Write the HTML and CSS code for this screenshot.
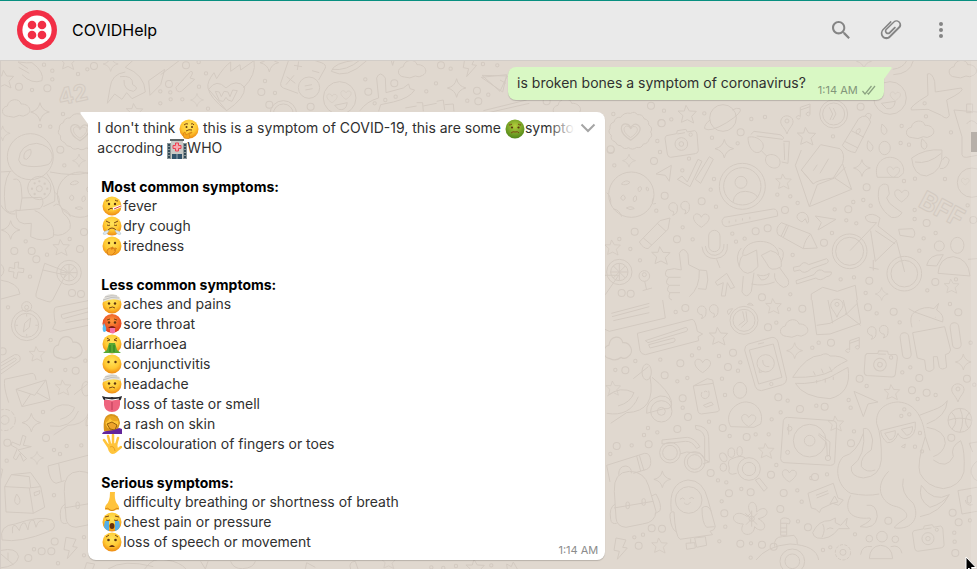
FILE: index.html
```
<!DOCTYPE html>
<html lang="en">
<head>
<meta charset="utf-8">
<title>COVIDHelp</title>
<link rel="stylesheet" href="styles.css">
</head>
<body>
<svg class="defs" aria-hidden="true">
  <defs>
    <radialGradient id="skin" cx=".5" cy=".35" r=".65"><stop offset="0" stop-color="#ffe45c"/><stop offset=".6" stop-color="#ffc832"/><stop offset="1" stop-color="#ee8a12"/></radialGradient>
    <radialGradient id="hot" cx=".5" cy=".35" r=".65"><stop offset="0" stop-color="#ff9a3c"/><stop offset="1" stop-color="#e2361c"/></radialGradient>
    <radialGradient id="sick" cx=".5" cy=".35" r=".65"><stop offset="0" stop-color="#b5cf3c"/><stop offset="1" stop-color="#4f8618"/></radialGradient>
    <path id="star" d="M-4 -26 L6 -9 L27 -8 L13 7 L19 27 L0 17 L-18 25 L-13 5 L-28 -9 L-9 -9Z"/>
    <path id="sparkle" d="M0 -28 Q4 -6 28 0 Q5 4 0 28 Q-4 6 -28 0 Q-5 -4 0 -28Z"/>
    <path id="heart" d="M0 22 C-34 2 -25 -22 -10 -18 Q-2 -16 0 -8 Q7 -22 18 -16 C32 -6 18 10 0 22Z"/>
    <path id="cloud" d="M-25 23 C-48 22 -48 -5 -28 -8 C-24 -32 10 -32 13 -14 C36 -16 50 8 30 18 Q20 26 8 20 Q-8 30 -25 23Z"/>
    <g id="camera"><path d="M-45 -25 L-14 -31 L-12 -40 L14 -44 L18 -36 L40 -40 Q46 -38 47 -30 L51 20 Q50 28 42 29 L-32 40 Q-40 40 -42 30 L-49 -18Z"/><circle r="19"/><circle r="7"/><path d="M-12 -30 L11 -34"/><circle cx="28" cy="-28" r="5"/></g>
    <path id="note" d="M-13 20 a6 5 0 1 1 0 -4 V-12 L16 -22 V10 a6 5 0 1 1 0 -4 M-13 -4 L16 -14"/>
    <g id="quotes"><path d="M-18 8 A13 13 0 1 1 -6 -2 Q-4 16 -20 20 Q-14 14 -18 8Z M18 4 A13 13 0 1 1 30 -6 Q32 12 16 16 Q22 10 18 4Z"/></g>
    <path id="pin" d="M0 34 C-8 12 -22 8 -18 -8 C-12 -26 14 -24 18 -6 C20 8 6 14 0 34Z M-6 -5 a6 6 0 1 0 12 0 a6 6 0 1 0 -12 0"/>
    <path id="bolt" d="M-14 -32 L16 -26 L6 -4 L20 -2 L-10 32 L-4 8 L-20 5Z"/>
    <g id="medal"><path d="M0 -54 Q12 -62 20 -50 Q36 -52 40 -38 Q56 -34 54 -20 Q68 -10 60 2 Q68 14 56 22 Q52 38 38 38 Q32 52 18 48 Q6 58 -6 49 Q-20 56 -28 44 Q-42 44 -46 32 Q-62 26 -58 12 Q-70 2 -62 -8 Q-64 -24 -50 -28 Q-46 -44 -30 -42 Q-20 -58 0 -54Z"/><use href="#heart" transform="scale(1.2)"/><use href="#heart" transform="scale(.85)"/></g>
    <g id="cookie"><circle r="68"/><path d="M-30 -32 q14 -16 26 -5 q-12 12 -26 5 M20 -20 q12 -10 10 6 q-10 12 -10 -6 M-32 10 q8 -18 14 0 q-6 14 -14 0 M6 10 q10 -16 10 6 q-12 12 -10 -6 M-15 40 q16 -8 24 2 q-14 6 -24 -2 M45 -22 q8 -2 6 10 q-8 2 -6 -10"/><path d="M-74 -6 q14 10 12 34 M-55 42 q20 4 26 24 M66 10 q-10 24 8 16"/></g>
    <g id="drink"><path d="M-32 -50 L35 -24 L-8 60 Q-14 70 -26 64 L-54 54 Q-60 50 -58 42Z M-38 -30 L30 -15"/><circle cx="41" cy="-22" r="37"/><circle cx="41" cy="-22" r="25"/><path d="M41 -46 V2 M17 -22 H65 M24 -39 L58 -5 M58 -39 L24 -5"/></g>
    <g id="scooter"><path d="M-88 110 L-40 78 Q50 75 30 -30 M-5 30 Q-30 92 -100 80 M25 -60 L-20 -24 M36 -28 Q84 10 94 42 Q100 70 72 66 L20 80 Q16 40 60 28 Q98 26 94 66"/><ellipse cx="20" cy="-44" rx="14" ry="24"/><circle cx="64" cy="74" r="32"/><circle cx="64" cy="74" r="12"/><path d="M-98 28 Q-60 -4 -18 18 Q-28 48 -66 58"/></g>
    <g id="backpack"><path d="M-55 -50 Q-58 -108 -10 -110 Q35 -110 48 -66 L70 10 Q68 44 30 48 L-20 58 Q-48 56 -50 30Z M-56 0 L62 -20 M-52 -12 Q-72 -2 -66 34 Q-64 50 -48 46 M56 -36 L70 -42 Q88 -10 82 8 L66 18"/><rect x="-20" y="-18" width="10" height="20" rx="5"/><rect x="28" y="-28" width="10" height="20" rx="5"/></g>
    <g id="face"><circle cx="10" cy="10" r="9.5" fill="url(#skin)"/></g>
  </defs>
</svg>
<div class="app">
  <header class="bar">
    <svg class="avatar" viewBox="0 0 40 40" role="img" aria-label="COVIDHelp"><circle cx="20" cy="20" r="20" fill="#f22f46"/><circle cx="20" cy="20" r="14.6" fill="#fff"/><g fill="#f22f46"><circle cx="15" cy="15" r="4.3"/><circle cx="25" cy="15" r="4.3"/><circle cx="15" cy="25" r="4.3"/><circle cx="25" cy="25" r="4.3"/></g></svg>
    <h1 class="name">COVIDHelp</h1>
    <nav class="tools">
      <button class="tool" aria-label="Search"><svg viewBox="0 0 24 24"><path d="M15.9 14.3H15l-.3-.3c1-1.1 1.6-2.7 1.6-4.3 0-3.7-3-6.7-6.7-6.7S3 6 3 9.7s3 6.7 6.7 6.7c1.6 0 3.2-.6 4.3-1.6l.3.3v.8l5.1 5.1 1.5-1.5-5-5.2zm-6.2 0c-2.6 0-4.6-2.1-4.6-4.6s2.1-4.6 4.6-4.6 4.6 2.1 4.6 4.6-2 4.6-4.6 4.6z"/></svg></button>
      <button class="tool" aria-label="Attach"><svg viewBox="0 0 24 24"><path d="M1.8 15.6c0 1.5.6 2.9 1.6 4s2.500 1.600 4 1.600 2.900-.600 4-1.600l9.500-9.500c.8-.8 1.300-1.900 1.300-2.900 0-1.300-.500-2.600-1.400-3.500-1.900-1.900-4.700-2-6.400-.200L6.600 11c-1.200 1.200-1.100 3.200.200 4.400 1.200 1.200 3.200 1.300 4.400.100l5.500-5.500c.300-.300.200-.700-.200-1-.400-.400-.800-.500-1.100-.200l-5.500 5.500c-.500.500-1.400.400-2-.200s-.700-1.500-.200-2l7.900-7.900c1.200-1.200 2.900-.800 4 .200 1.100 1.200 1.100 2.900 0 4l-9.500 9.500c-.8.800-1.800 1.200-2.800 1.200s-2-.400-2.800-1.200c-1.500-1.500-1.500-4.100 0-5.600l7.900-7.900c.300-.300.200-.700-.100-1-.300-.300-.700-.400-1-.100l-7.900 7.900c-1 1.400-1.600 2.900-1.600 4.400z"/></svg></button>
      <button class="tool" aria-label="Menu"><svg viewBox="0 0 24 24"><circle cx="12" cy="6" r="2"/><circle cx="12" cy="12" r="2"/><circle cx="12" cy="18" r="2"/></svg></button>
    </nav>
  </header>
  <main class="chat">
    <svg class="wallpaper" aria-hidden="true" width="1131" height="569">
      <g transform="translate(0 -61)">
      <!-- right column, upper -->
      <g transform="translate(600 100) scale(.3333)">
        <g class="rings"><path class="ring" id="ra" d="M40 42h0M192 32h0M214 58h0M172 123h0M180 156h0M43 196h0M336 113h0M454 57h0M495 51h0M413 130h0M267 176h0M247 211h0M342 237h0M332 269h0M169 332h0M348 320h0M248 382h0M278 418h0M58 417h0M120 481h0M91 447h0M397 401h0M434 416h0M408 425h0M532 284h0M593 309h0M571 289h0M578 465h0M699 109h0M704 328h0M739 361h0M769 370h0M790 300h0M760 306h0M812 317h0M696 399h0M762 532h0M722 538h0M905 78h0M978 49h0M902 129h0M927 134h0M1053 97h0M1035 237h0M945 236h0M912 243h0M944 330h0M944 357h0M1007 399h0M971 415h0M958 452h0M797 579h0M571 583h0M982 571h0M1103 316h0M1068 538h0M313 40h0M152 18h0M974 10h0"/><use href="#ra"/></g>
        <g class="rings big"><path class="ring" id="rb" d="M184 69h0M32 150h0M162 183h0M194 287h0M305 304h0M104 395h0M231 418h0M422 97h0M555 330h0M467 394h0M503 385h0M672 428h0M800 262h0M745 328h0M980 369h0M782 20h0M808 542h0M1006 546h0M486 592h0M65 579h0M92 581h0M1120 360h0"/><use href="#rb"/></g>
        <use href="#medal" x="92" y="94"/><use href="#camera" x="244" y="132"/><use href="#star" x="262" y="42"/><use href="#sparkle" x="373" y="146"/><use href="#sparkle" transform="translate(87 182) scale(.7)"/><use href="#cookie" x="94" y="284"/>
        <circle cx="369" cy="54" r="40"/><path d="M330 60 Q312 74 314 86 Q330 98 380 68 Q430 36 420 26 Q412 22 396 30"/>
        <path d="M452 104 L462 94 L540 104 Q556 112 548 118 L470 108 M444 112 C444 150 470 168 484 152 C504 130 470 104 444 112Z M500 168 C486 190 518 214 536 200 C552 176 520 154 500 168Z M484 152 L500 168 M550 124 H568 L564 190 L545 186 M552 128 L554 180"/>
        <use href="#pin" x="561" y="68"/><use href="#star" x="620" y="108"/><use href="#note" x="614" y="34"/>
        <circle cx="701" cy="42" r="42"/><circle cx="701" cy="42" r="33"/><path d="M688 22 L698 42 L690 60 M700 24 L708 42 L698 60"/>
        <path d="M727 136 L776 56 Q800 36 812 66 L766 158 Q740 154 727 136Z M796 48 Q802 34 814 44 L810 58 M754 92 L792 112 M734 124 L774 144 M770 102 Q764 88 780 86 Q784 100 770 102"/>
        <path id="drop" d="M846 72 Q872 92 854 104 Q838 100 846 72Z"/><use href="#drop" x="-42" y="50"/><use href="#drop" x="120" y="44"/><ellipse cx="854" cy="144" rx="17" ry="20"/>
        <use href="#cloud" x="962" y="90"/>
        <path d="M935 174 Q975 145 1026 150 Q1032 214 980 228 Q940 228 935 174Z M945 186 Q985 194 1024 160 M1028 180 Q1036 162 1048 180 Q1042 208 1020 206"/>
        <path d="M604 210 L662 134 L720 146 Q736 160 728 190 L700 234 Q650 240 640 252Z M604 150 L586 196 L628 320 L652 254 L704 234 L755 268 L628 320 M604 210 L640 252 M728 192 L755 268 M704 234 L736 202 M640 212 L652 194 M660 220 L686 176"/>
        <use href="#sparkle" transform="translate(786 204) scale(.9)"/>
        <path d="M832 232 C820 190 850 170 872 172 C910 174 916 214 908 222 L896 232Z"/><use href="#heart" transform="translate(880 215) scale(.8)"/>
        <path d="M838 262 Q850 246 864 256 L868 282 L860 294 Q866 312 884 322 L906 338 Q896 356 874 352 C842 330 828 300 838 262Z"/><use href="#heart" transform="translate(905 286) scale(.9)"/>
        <text x="952" y="318" font-size="76" transform="rotate(28 952 318)">BFF</text>
        <use href="#star" transform="translate(551 244) scale(.85)"/>
        <circle cx="427" cy="259" r="69"/><circle cx="427" cy="259" r="56"/><circle cx="423" cy="247" r="18"/><path d="M399 306 Q404 274 436 274 Q464 276 473 292"/>
        <path d="M372 352 L520 327 Q534 326 533 348 L382 380 Q366 380 366 362Z"/><path d="M386 366h3M406 362h3M426 358h3M448 354h3" stroke-width="7"/>
        <path d="M168 222 L214 196 L208 244 L196 226Z M232 238 L246 228 L262 246 L294 178 L306 184 L270 260Z M286 238 L328 170 L340 178 L302 250Z"/>
        <use href="#quotes" x="238" y="326"/><use href="#heart" x="304" y="360"/>
        <path d="M118 426 L180 362 L210 354 L204 388 L144 446 Q130 446 118 426Z M130 414 L156 436 M172 370 L198 394 M544 368 L632 402 L652 444 L610 446 L534 404 Q524 384 544 368Z M560 374 L544 408 M566 376 L550 412 M632 402 Q614 420 610 446"/>
        <path d="M606 366 Q584 356 594 342 Q610 330 622 346 Q630 364 622 370 L616 356Z M646 348 L708 358 L654 390 L664 368Z"/>
        <use href="#star" transform="translate(183 466)"/><use href="#star" transform="translate(38 442) scale(.85)"/>
        <rect x="326" y="391" width="34" height="64" rx="17"/><path d="M306 440 Q310 476 346 476 Q386 472 382 432 M316 438 Q320 466 346 466 Q374 460 372 432 M350 478 L360 504"/>
        <path d="M200 510 Q224 502 244 510 Q240 476 238 460 Q250 436 264 462 L266 494 L298 510 Q300 564 268 590 M298 510 L320 512 Q328 540 318 568 L294 566 M200 510 Q190 528 206 532 L242 532 M206 532 Q192 550 208 556 L240 556 M208 556 Q196 572 210 578 L240 578 M210 578 Q202 596 216 600"/>
        <circle cx="58" cy="516" r="38"/><circle cx="58" cy="516" r="26"/><path d="M58 490V542M32 516H84M40 498L76 534M76 498L40 534M0 526L56 526L16 584"/><circle cx="133" cy="528" r="16"/><circle cx="133" cy="524" r="6"/><path d="M134 544 L140 570 M128 572 L156 564"/>
        <path d="M346 546 L380 520 L404 562 L392 566 L382 548 L376 588 L364 588 L370 548 L352 556Z"/>
        <path d="M428 464 C430 412 530 410 536 464 M418 500 Q404 466 424 444 M536 444 Q560 450 544 486 M418 500 Q420 460 438 466 L470 450 L474 500 Q440 540 418 500Z M484 466 L512 452 Q548 460 544 500 Q510 520 500 490Z M430 528 L426 576 Q440 600 454 574 L462 518 M524 520 Q520 546 550 562 Q572 560 564 538 L538 502 M454 552 Q490 560 524 546 M472 524 Q492 532 508 520 Q504 540 484 540Z"/>
        <path d="M580 502 L600 498 Q610 480 626 494 L680 476 Q690 484 680 490 L634 506 Q612 526 600 510 L582 514Z M588 542 L642 524 Q656 500 674 516 L694 516 Q696 528 680 530 Q660 546 648 534 L590 552Z"/>
        <circle cx="749" cy="454" r="52"/><circle cx="749" cy="454" r="42"/><circle cx="913" cy="521" r="52"/><circle cx="913" cy="521" r="40"/><path d="M750 452 L830 368 Q796 370 796 350 Q816 334 840 354 L834 378 L890 422 L826 484 L812 392 M890 424 L914 516 M896 388 L938 386 Q950 400 940 412 L900 406Z M826 392 L886 432 M808 502 L836 508 M820 480 L820 512"/>
        <circle cx="1018" cy="438" r="15"/><ellipse cx="1072" cy="436" rx="20" ry="24"/><path d="M1014 520 Q1018 472 1060 470 Q1106 476 1110 528Z M980 496 Q988 462 1030 464 L1010 498Z M1104 478 L1131 476"/>
        <use href="#star" transform="translate(1055 558) scale(.8)"/><use href="#sparkle" transform="translate(845 582) scale(.7)"/>
        <path d="M634 582 L668 562 L712 574 L766 556 L772 600 M634 582 V600 M1100 12 h18 v26 h-18Z M1131 36 L1062 30 L1086 110 V164 Q1088 174 1100 172 L1131 166 M1100 72 q14 -20 31 0"/><circle cx="1116" cy="248" r="44"/><use href="#heart" transform="translate(1096 244) scale(.5)"/>
      </g>
      <!-- right column, lower -->
      <g transform="translate(600 300) scale(.3333)">
        <g class="rings"><path class="ring" id="rc" d="M227 36h0M297 145h0M276 166h0M181 179h0M106 183h0M46 210h0M232 244h0M262 234h0M366 236h0M375 285h0M357 168h0M421 187h0M414 212h0M529 68h0M567 28h0M637 143h0M656 128h0M830 40h0M899 67h0M1050 12h0M1112 128h0M931 202h0M907 217h0M800 258h0M746 300h0M752 323h0M953 297h0M1007 285h0M649 317h0M542 337h0M515 358h0M563 302h0M327 365h0M389 408h0M467 403h0M506 403h0M172 397h0M144 384h0M132 405h0M248 323h0M95 436h0M31 462h0M529 495h0M354 541h0M379 547h0M424 567h0M365 604h0M376 680h0M592 571h0M605 605h0M594 664h0M765 703h0M681 523h0M634 534h0M129 704h0M103 712h0M358 724h0M453 730h0M452 773h0M669 750h0M691 742h0M1063 698h0M1064 725h0M1110 661h0M966 454h0M945 440h0M960 399h0M913 328h0M904 348h0M928 343h0M762 394h0M1123 254h0"/><use href="#rc"/></g>
        <g class="rings big"><path class="ring" id="rd" d="M256 24h0M504 82h0M399 158h0M384 201h0M241 190h0M76 211h0M194 226h0M607 26h0M804 22h0M881 35h0M1075 37h0M693 128h0M779 236h0M958 234h0M936 271h0M980 278h0M1101 236h0M535 292h0M600 327h0M674 320h0M264 351h0M248 295h0M368 384h0M440 411h0M232 387h0M146 433h0M50 438h0M332 519h0M513 524h0M645 531h0M753 430h0M551 579h0M387 580h0M373 640h0M452 577h0M541 627h0M624 682h0M421 731h0M486 734h0M521 740h0M116 737h0M155 685h0M186 686h0M1054 413h0M1058 638h0M1076 667h0M865 662h0M1066 759h0"/><use href="#rd"/></g>
        <path d="M15 88 L28 94 L196 54 L188 0 M34 40 L148 10 M36 50 L148 20 M40 62 L148 38 M112 100 L276 58 Q286 58 292 94 L308 102 L294 110 L296 122 L136 164 Q124 164 120 152Z M136 122 L258 82 Q268 86 260 94 L144 128Z M146 134 L222 114 Q230 120 222 126 L150 144Z"/>
        <use href="#quotes" x="324" y="36"/><circle cx="432" cy="61" r="42"/><circle cx="432" cy="61" r="33"/><path d="M428 34 L434 62 L416 76 M438 34 L442 66 L424 82 M386 44 Q374 28 398 26Z M442 14 Q450 4 460 16Z"/>
        <use href="#star" x="356" y="108"/><use href="#star" transform="translate(521 18) scale(.85)"/><use href="#cloud" x="584" y="86"/><use href="#cloud" transform="translate(55 146) scale(1 1.3)"/>
        <path d="M636 0 L650 104 L690 102 L782 70 L770 0 M650 76 L690 70 L740 42 L772 10 M736 40 L782 76 M684 0 L698 70 M740 42 L730 0"/><use href="#pin" x="711" y="18"/>
        <path d="M936 82 Q926 48 944 36 L926 26 M944 36 Q974 16 1002 26 L1016 10 L1010 30 Q1034 44 1028 66Z M938 98 L1034 80 L1052 150 Q1050 162 1036 164 L1040 202 Q1026 212 1018 202 L1012 170 H1000 L1002 206 Q990 220 978 210 L974 180 L952 174Z"/><rect x="904" y="98" width="26" height="78" rx="13" transform="rotate(-8 917 137)"/><rect x="1054" y="68" width="26" height="78" rx="13" transform="rotate(-8 1067 107)"/><path d="M957 62h2M1005 52h2"/>
        <use href="#quotes" x="834" y="98"/><use href="#note" x="762" y="134"/><use href="#camera" transform="translate(840 194) rotate(12)"/><use href="#sparkle" transform="translate(584 152) scale(.85)"/><use href="#sparkle" transform="translate(1090 186) scale(.85)"/>
        <path d="M434 150 Q434 136 446 132 L516 112 Q530 112 534 126 L560 236 Q560 250 548 254 L484 272 Q470 272 466 260Z M448 150 L520 132 L546 232 L476 252Z M474 132 L492 128"/><circle cx="497" cy="190" r="26"/><path d="M478 206 V218 L490 214 M488 180 Q488 202 508 200"/><circle cx="514" cy="252" r="5"/>
        <path d="M578 232 Q620 166 662 166 Q680 156 690 168 Q724 166 742 182 Q704 200 696 212 Q660 234 578 232Z M586 250 Q640 254 690 232 Q736 206 744 202 Q756 280 690 296 Q610 292 586 250Z M640 214 L646 226 M664 206 L670 220 M688 200 L696 216 M650 250 V240 M676 248 V236 M700 240 V230"/>
        <use href="#heart" transform="translate(308 196)"/><use href="#scooter" transform="translate(120 260)"/>
        <path d="M280 258 L340 250 L358 330 Q356 336 348 336 L304 342 Q296 342 294 334Z M280 258 L322 236 L338 240 L340 250 M310 316 L334 306 L340 314 L318 322Z M306 276 Q298 294 316 296 Q332 292 326 272 M312 276 Q318 270 322 276"/>
        <use href="#star" transform="translate(40 264) scale(.8)"/><ellipse cx="420" cy="271" rx="20" ry="24"/><path d="M392 380 C370 340 410 304 440 306 C476 308 492 344 482 372 L462 382Z"/><use href="#heart" transform="translate(446 360) scale(.9)"/>
        <path d="M186 420 L262 412 Q284 414 300 440 L290 446 Q276 422 256 424 L186 432Z M286 376 Q324 378 326 410 L328 486 L314 480 V412 Q308 390 288 388Z M240 462 L260 456 L300 460 L316 480 L328 486 L308 492"/><circle cx="210" cy="458" r="31"/><circle cx="210" cy="458" r="22"/><circle cx="284" cy="486" r="31"/><circle cx="284" cy="486" r="22"/>
        <ellipse cx="394" cy="458" rx="10" ry="14"/><ellipse cx="419" cy="454" rx="8" ry="14"/><ellipse cx="370" cy="472" rx="10" ry="14" transform="rotate(-30 370 472)"/><ellipse cx="370" cy="502" rx="10" ry="12"/><circle cx="447" cy="507" r="34"/><circle cx="447" cy="507" r="20"/><path d="M466 540 L478 534 L502 564 L492 574Z M410 520 Q380 530 388 504 Q380 480 396 476 Q424 464 436 474"/>
        <use href="#star" transform="translate(499 452) scale(.85)"/><use href="#heart" transform="translate(568 526) scale(.9)"/><use href="#star" transform="translate(708 370) scale(.85)"/><use href="#star" transform="translate(876 276) scale(.85)"/><use href="#pin" x="1074" y="272"/>
        <path d="M562 352 L700 362 Q710 364 710 374 L704 488 Q702 496 692 496 L552 488 Q542 486 542 476 L550 362 Q552 352 562 352Z M654 404 L680 428 L682 470 M656 400 L690 426 L688 470 M566 372 V404"/><circle cx="629" cy="422" r="49"/><circle cx="629" cy="422" r="16"/><circle cx="569" cy="386" r="7"/><circle cx="563" cy="457" r="6"/><circle cx="684" cy="474" r="8"/>
        <path d="M762 274 L834 306 L804 312 L790 350Z"/>
        <path d="M830 370 C826 320 870 306 896 306 C950 310 970 360 976 410 L990 452 M830 370 Q846 410 844 480 Q840 530 790 534 Q750 530 754 500 Q800 470 790 386 Q810 378 818 420 L814 450 Q780 470 784 500 Q800 520 826 510 M790 400 Q770 460 730 470 C700 500 712 560 752 580 Q800 590 838 582 M958 346 L1000 330 Q1030 320 1042 302 Q1040 350 980 372 M980 382 Q1036 390 1036 430 Q1030 460 1000 470 M976 410 Q950 490 960 520 Q980 560 1030 566 Q1080 560 1092 516 Q1096 450 1082 422 Q1050 440 1060 470 Q1040 510 1000 480 M866 514 C820 560 844 612 890 620 C920 630 930 650 910 660 Q880 680 884 684 C940 690 960 650 940 610 Q900 580 910 536 M752 586 C730 630 750 660 810 654 Q820 660 780 680 Q826 690 832 650 Q830 610 800 616 M1048 584 Q1000 610 964 556 Q952 600 990 622 Q1030 610 1048 584Z M1048 584 Q1020 640 960 650"/>
        <path d="M842 392 L946 366 Q950 410 918 416 Q900 416 894 400 Q884 430 862 428 Q844 414 842 392Z M854 400 L886 392 Q888 418 868 420Z M904 388 L938 380 Q938 404 920 406Z M904 440 L916 432 L914 444Z"/>
        <circle cx="1080" cy="361" r="36"/><path d="M1080 325 Q1096 360 1080 397 M1044 361 Q1080 348 1116 361 M1054 336 Q1080 360 1056 388 M1108 338 Q1086 360 1106 386"/>
        <path d="M20 496 L134 460 Q150 458 152 482 Q154 502 140 508 L100 520 M20 496 L30 546 M110 468 L122 514 M118 466 L132 512 M56 524 Q56 498 78 498 Q96 502 94 520"/><use href="#backpack" transform="translate(98 624)"/><use href="#sparkle" transform="translate(187 538) scale(.9)"/>
        <path d="M214 634 Q204 548 264 540 Q310 540 324 600 L346 680 Q344 692 330 694 L338 704 L240 718 Q226 710 222 636Q208 632 210 652 Q214 690 230 696 M306 624 Q322 610 334 634 M306 624 Q306 670 320 682 L344 680 M258 730 L284 728 L286 744 L260 748Z M284 714 L316 710 L320 736 L290 742Z M272 716 V730 M240 598 q8 -8 14 0 M268 596 q8 -8 14 0 M252 608 q10 12 20 -2"/><circle cx="266" cy="600" r="40"/>
        <path d="M624 580 L700 550 L714 594 L730 600 L716 616 L698 610 L664 626 L658 638 L648 628 L634 624Z M648 586 L684 572 M650 594 L686 580 M690 612 L704 588 L714 606Z M1074 572 L1131 562 M1074 572 L1086 642 L1131 634 M1096 600 Q1100 620 1118 614 M1102 590 v18 q8 4 12 -2 v-20Z M1131 426 L1108 430 L1118 456 M1131 484 Q1110 500 1114 520 Q1120 540 1131 542"/>
        <path d="M452 640 C430 604 474 590 470 636 C500 606 520 650 474 656 C514 676 486 706 464 680 C462 716 410 708 430 672 C380 672 400 618 442 650Z M436 640 L472 674 M472 640 L438 674 M455 632 V680"/><circle cx="455" cy="656" r="8"/>
        <path d="M638 698 Q656 660 690 662 L706 654 L706 668 L722 676 L742 654 L738 674 L748 686 L716 686 Q690 722 652 714 Q640 710 638 698Z M668 672 Q678 690 666 712 M680 688 q10 -8 20 -2 M542 706 V660 Q546 650 566 656 Q574 662 568 672 L560 670 V706Z M542 670 h18 M542 684 h18 M542 696 h18 M524 740 Q520 710 548 710 L582 706 Q594 716 592 732 M468 780 Q500 738 570 732 Q650 736 656 780"/><circle cx="577" cy="784" r="37"/><circle cx="577" cy="784" r="22"/>
        <circle cx="729" cy="757" r="23" stroke-dasharray="10 4"/><circle cx="729" cy="757" r="9"/><circle cx="846" cy="710" r="16"/><circle cx="808" cy="716" r="10"/><circle cx="886" cy="718" r="10"/><path d="M808 776 Q810 738 842 736 Q876 738 878 776Z M782 764 Q786 734 816 740 M906 760 Q900 732 872 740"/><use href="#camera" transform="translate(984 716) scale(.95)"/><use href="#bolt" x="62" y="746"/><use href="#star" transform="translate(179 736) scale(.85)"/>
      </g>
      <!-- left edge -->
      <g transform="translate(0 60) scale(.3333)">
        <g class="rings"><path class="ring" id="re" d="M132 14h0M157 32h0M157 58h0M96 90h0M189 162h0M120 198h0M151 200h0M193 316h0M77 544h0M209 537h0M141 584h0M90 650h0M24 742h0M152 840h0M153 930h0M196 930h0M256 902h0M129 1056h0M162 1170h0M200 1158h0M244 1156h0M20 1202h0M162 1306h0M102 1468h0M174 1510h0M252 1432h0M234 42h0M262 28h0M180 1182h0"/><use href="#re"/></g>
        <g class="rings big"><path class="ring" id="rf" d="M57 80h0M142 85h0M181 269h0M252 516h0M95 573h0M43 573h0M109 598h0M240 567h0M216 699h0M243 702h0M8 874h0M227 932h0M138 1134h0M22 1148h0M164 1445h0M125 1474h0M154 1474h0M85 1494h0M282 18h0"/><use href="#rf"/></g>
        <use href="#star" x="14" y="57"/><use href="#star" transform="translate(204 4) scale(.9)"/><path d="M54 6 Q84 10 96 8 Q134 36 126 62 Q96 74 66 44 M54 6 L84 26 M56 22 L88 40"/><use href="#cloud" x="50" y="146"/><use href="#sparkle" x="120" y="156"/><use href="#sparkle" transform="translate(8 220) scale(.8)"/><use href="#sparkle" transform="translate(237 302) scale(.7)"/><use href="#medal" x="240" y="216"/>
        <text x="180" y="136" font-size="68" transform="rotate(-12 180 136)">42</text>
        <circle cx="91" cy="290" r="69"/><path d="M56 300 Q60 252 110 250 Q148 256 156 282 Q160 304 144 314 Q100 326 64 314Z M72 296 Q68 272 92 268 Q98 284 80 298Z M0 336 L34 334 M30 334 Q6 370 16 444 Q24 466 48 450 L60 452 L66 414 L124 412 Q136 430 120 446 L48 452 M40 358 Q62 352 64 384 L66 414 M48 452 Q44 500 94 490 L92 530 Q130 550 160 530 Q166 500 142 480 Q120 456 104 452 M160 438 Q180 420 190 460 Q216 480 210 506 Q190 532 160 524 M140 340 Q170 380 164 424 L130 440 M0 432 Q20 466 46 462 M150 336 Q220 350 264 338"/><circle cx="118" cy="384" r="35"/><circle cx="118" cy="386" r="9"/><path class="spots" d="M118 364h0M134 371h0M142 386h0M134 402h0M104 402h0M96 386h0M104 370h0"/>
        <use href="#cookie" x="240" y="404"/><use href="#sparkle" x="32" y="510"/><use href="#star" transform="translate(184 562) scale(.9)"/><path d="M28 622 L44 626 L44 608 L56 606 L54 624 L72 626 L70 638 L54 636 L50 656 L40 652 L42 636 L26 634Z M0 610 Q24 630 0 652 M0 660 Q56 668 60 702 L0 718"/><use href="#drink" transform="translate(166 660)"/>
        <circle cx="80" cy="796" r="46"/><circle cx="80" cy="796" r="36"/><circle cx="80" cy="740" r="15"/><circle cx="80" cy="742" r="6"/><path d="M70 816 L74 790 L92 774 L88 802Z M80 762v8M80 822v8M46 796h8M106 796h8"/>
        <path d="M264 722 L166 742 Q158 748 166 790 L158 806 L180 814 L264 796 M264 744 L184 764 Q182 774 190 776 L264 756 M264 776 L196 788"/><use href="#cloud" transform="translate(205 865) scale(1.05 1.3)"/><use href="#star" transform="translate(111 882) scale(.85)"/><use href="#star" transform="translate(190 982) scale(.85)"/><path d="M0 910 L44 884 Q64 882 60 902 L0 944 M0 920 L44 894 Q54 898 44 904 L0 932 M26 1028 Q10 980 14 958 L96 940 Q106 940 108 960 M48 988 L138 960 L150 1020 L66 1040Z M48 988 L104 1006 L138 960 M66 1040 L92 1002 M150 1020 L110 998"/>
        <circle cx="14" cy="1080" r="32" stroke-dasharray="14 5"/><circle cx="14" cy="1080" r="13"/><use href="#sparkle" x="94" y="1088"/><use href="#sparkle" transform="translate(111 1194) scale(.7)"/><path d="M36 1146 L60 1156 L68 1126 L78 1130 L70 1156 L94 1160 L54 1170 L80 1196 L70 1204 L60 1180 L48 1200 L40 1194 L52 1166 L34 1156Z"/><use href="#scooter" transform="translate(240 1026) scale(.9)"/>
        <path d="M14 1280 L34 1244 L92 1238 L122 1280 L134 1342 L100 1360 L18 1356Z M14 1280 L88 1284 L122 1280 M88 1284 L100 1360 M34 1244 L88 1250 L92 1284 M50 1302 Q68 1324 54 1334 Q36 1330 50 1302 M102 1298 L120 1292 L118 1302 L104 1308Z M0 1226 L8 1228 L2 1256 M6 1440 Q-4 1396 46 1392 Q120 1366 156 1380 Q174 1404 148 1414 Q60 1450 6 1440Z M38 1420 Q34 1390 48 1398 L58 1412 Q64 1384 76 1390 L84 1410 Q88 1372 102 1382 L108 1402 Q116 1376 130 1384"/>
        <path d="M144 1218 L264 1186 M144 1218 Q148 1266 168 1270 L194 1262 M176 1210 L184 1264"/><use href="#backpack" transform="translate(248 1344)"/><use href="#bolt" x="212" y="1464"/><path d="M0 1472 Q50 1460 56 1490 Q50 1520 0 1524 M0 1480 L40 1514 M24 1500 V1478"/>
      </g>
      <!-- strip under the header -->
      <g transform="translate(100 58) scale(.3333)">
        <g class="rings"><path class="ring" id="rg" d="M318 46h0M296 12h0M181 100h0M211 103h0M212 124h0M181 136h0M247 124h0M297 86h0M324 152h0M495 69h0M525 105h0M796 64h0M887 116h0M856 126h0M824 136h0M1008 76h0M979 100h0M1052 32h0M1149 18h0M1165 110h0M1192 22h0M1102 128h0"/><use href="#rg"/></g>
        <g class="rings big"><path class="ring" id="rh" d="M207 78h0M258 22h0M484 102h0M883 76h0M805 101h0M1023 22h0M1131 98h0M1135 130h0M632 146h0M508 140h0"/><use href="#rh"/></g>
        <use href="#sparkle" transform="translate(32 18) scale(.8)"/><path d="M136 102 Q134 50 76 28 L100 6 M76 42 Q34 48 30 90 L22 136 L44 108 L66 124 L80 104 L96 122 L136 102 M60 56 Q100 50 98 80 Q120 90 100 100 Q70 96 72 66 M146 68 L194 34 L182 80 L150 112Z M182 50 L240 6 M228 88 L272 40 Q284 40 270 60 L284 64 L244 100 Q230 106 228 88Z"/><use href="#sparkle" transform="translate(291 126) scale(.7)"/><use href="#star" transform="translate(104 160) scale(.9)"/>
        <path d="M380 158 Q330 120 324 90 Q320 72 342 44 L350 62 Q372 26 392 12 L392 40 L420 20 L422 36 L462 8 Q470 50 430 90 M326 94 Q350 60 378 90 Q410 60 434 88 Q436 120 380 158Z M346 100 L358 102 L364 116 L372 100 L384 102 L390 116 L398 96 L412 98 L396 130 L384 126 L378 118 L370 130 L358 128Z"/>
        <use href="#sparkle" x="508" y="14"/><path d="M566 6 L542 76 Q540 86 550 90 L594 106 M676 30 Q680 20 664 14 L640 6 M676 30 L656 66 M582 22 L606 26 M596 10 L592 36 M560 56 L586 76 M582 52 L558 80 M636 38 L658 44 M614 84 L636 80 M616 96 L638 92"/><circle cx="627" cy="89" r="32"/>
        <circle cx="719" cy="120" r="49"/><use href="#heart" transform="translate(696 120) scale(.65)"/><use href="#heart" transform="translate(738 110) scale(.65)"/><path d="M704 142 L742 134 Q738 160 716 154Z M694 40 Q700 14 770 6 M694 40 Q740 66 800 8 M696 34 Q740 40 780 6 M780 158 Q800 130 836 120 L830 60 Q840 36 856 60 L858 104 L910 90 L926 78 L930 92 L944 96 Q930 120 880 132 L842 140 L836 160"/><use href="#cloud" x="938" y="34"/><path d="M874 8 l4 14 l4 -14"/>
        <use href="#sparkle" x="1070" y="90"/><use href="#bolt" x="1110" y="24"/><path d="M1146 52 L1222 54 L1200 100Z M1200 66 L1218 76 M950 134 L968 134 L970 160 M1010 130 L1030 126 L1034 156 M970 144 L1010 136 M1034 140 L1060 138 L1062 160 M916 150 L950 144"/><circle cx="550" cy="168" r="40"/><circle cx="550" cy="168" r="30"/>
      </g>
      <!-- around the reply bubble -->
      <g transform="translate(480 60) scale(.3333)"><path d="M4 52 L80 44 L68 96Z M10 152 L140 120 M16 160 L148 130"/><use href="#cloud" x="262" y="144"/><g class="rings big"><path class="ring" id="ri" d="M200 124h0M392 268h0M545 190h0M513 137h0"/><use href="#ri"/></g></g>
      <g transform="translate(800 0) scale(.3333)"><circle cx="270" cy="294" r="49"/><use href="#heart" transform="translate(286 288) scale(.65)"/><path d="M244 310 L286 304 Q282 330 260 326Z M382 222 Q396 216 404 244 L406 276 L484 264 Q498 272 440 300 L448 346 Q442 362 424 346 L384 328 L334 330 Q324 322 384 286Z M340 182 Q330 222 280 224 M320 182 Q310 204 278 208"/><use href="#cloud" x="490" y="208"/><use href="#sparkle" transform="translate(192 184) scale(.8)"/></g>
      <!-- bottom edge -->
      <g transform="translate(80 550) scale(.3333)"><path d="M84 57 Q130 26 220 50 M194 57 Q220 18 260 30 Q300 36 318 57 M362 34 L376 57 L384 34 M452 34 Q460 57 488 56 Q520 54 526 34 M676 57 L680 38 L706 52 M812 57 Q804 36 826 34 L834 57 M1282 57 L1280 42 L1294 50 L1300 36 L1312 57 M14 57 L20 38 L44 42 L38 57"/><use href="#star" transform="translate(926 34) scale(.8)"/><use href="#star" x="1186" y="54"/><g class="rings"><path class="ring" id="rj" d="M12 16h0M1054 52h0M1090 54h0M1128 48h0M1234 46h0"/><use href="#rj"/></g></g>
      </g>
    </svg>
    <div class="thread">
      <article class="bubble sent">
        <svg class="tail" viewBox="0 0 8 13" aria-hidden="true"><path d="M0 0h6.500c1.500 0 1.500 1 .700 2L0 12z" fill="#d9f8c4"/></svg>
        <p class="line">is broken bones a symptom of coronavirus?</p>
        <div class="meta"><time>1:14 AM</time><svg class="ticks" viewBox="0 0 16 12" role="img" aria-label="Delivered"><path d="M1.500 7L4 10L10.500 2M6.500 9L7.500 10L14 2" fill="none" stroke="#8ba281" stroke-width="1.200"/></svg></div>
      </article>
      <article class="bubble received">
        <svg class="tail" viewBox="0 0 8 13" aria-hidden="true"><path d="M8 0H1.500C0 0 0 1 .8 2L8 12z" fill="#fff"/></svg>
        <p class="line">I don't think <svg class="emoji" viewBox="0 0 20 20" role="img" aria-label="thinking"><use href="#face"/><path d="M5 6q2-2 4-1M12 5q2-1 3 1M7 12q3-2 6-1" class="ink"/><circle cx="7.500" cy="8" r="1"/><circle cx="13" cy="8" r="1"/><path d="M5 19q-2-5 1-6q1 2 1 3q4-3 6-3q1 1-3 2q2 4-1 5z" fill="#f6a51c" stroke="#c97510" stroke-width=".5"/></svg> this is a symptom of COVID-19, this are some <svg class="emoji" viewBox="0 0 20 20" role="img" aria-label="nauseated"><circle cx="10" cy="10" r="9.500" fill="url(#sick)"/><path d="M4 6q2 0 3-1M13 5q1 1 3 1M6 14q2-2 4-1q3-1 4 1" class="ink"/><circle cx="7" cy="8.500" r="1.100"/><circle cx="13.500" cy="8.500" r="1.100"/></svg>symptoms<br>accroding <svg class="emoji" viewBox="0 0 20 20" role="img" aria-label="hospital"><path d="M0 4h20v16H0z" fill="#8b9697"/><path d="M4 1h12v19H4z" fill="#c8c9c5"/><path d="M3 0h14v2H3z" fill="#5d6566"/><path d="M8.500 4h3v2.500H14v3h-2.500V12h-3V9.500H6v-3h2.500z" fill="#f7a9ae" stroke="#ee3e50"/><path d="M5 15h10v5H5z" fill="#32546c"/><path d="M2 5v15M18 5v15" stroke="#334b59" stroke-width="2" stroke-dasharray="2 1"/><path d="M10 15v5" stroke="#99aab5"/></svg>WHO</p>
        <section class="group">
          <h2>Most common symptoms:</h2>
          <ul>
            <li><svg class="emoji" viewBox="0 0 20 20" aria-hidden="true"><use href="#face"/><path d="M4 5q2 0 3-1M13 4q1 1 3 1M6 14q3-3 6-1" class="ink"/><circle cx="7" cy="8" r="1.200"/><circle cx="13" cy="8" r="1.200"/><path d="M11 13l8-3" stroke="#fff" stroke-width="2.500"/><path d="M12 13l7-3" stroke="#d8434e"/></svg>fever</li>
            <li><svg class="emoji" viewBox="0 0 20 20" aria-hidden="true"><use href="#face"/><path d="M4 5l4 2M16 5l-4 2M5 9q2 1 3 0M12 9q2 1 3 0M6 14q4-4 8 0" class="ink"/><path d="M7 14q-2 6-6 4q0-3 6-4M13 14q2 6 6 4q0-3-6-4" fill="#dce9f3" stroke="#9bb2c2" stroke-width=".4"/></svg>dry cough</li>
            <li><svg class="emoji" viewBox="0 0 20 20" aria-hidden="true"><use href="#face"/><circle cx="7" cy="7" r="1.200"/><circle cx="13" cy="7" r="1.200"/><path d="M6 19q-2-4 0-6l5-2q1 1-2 2l5-1q2 1-2 2q3 0 1 2l-3 3z" fill="#f9a92b" stroke="#cb7113" stroke-width=".7"/></svg>tiredness</li>
          </ul>
        </section>
        <section class="group">
          <h2>Less common symptoms:</h2>
          <ul>
            <li><svg class="emoji" viewBox="0 0 20 20" aria-hidden="true"><g id="bandage"><use href="#face"/><path d="M1 8Q1 0 10 0Q18 1 19 7Q11 3 1 8z" fill="#e5e3df"/><path d="M1 6Q9 2 17 4M3 3Q9 1 15 2" stroke="#aaa8a4" stroke-width=".6" fill="none"/><path d="M7 14q4-2 6 0" class="ink"/><circle cx="7" cy="9.500" r="1.200"/><circle cx="13" cy="9.500" r="1.200"/></g></svg>aches and pains</li>
            <li><svg class="emoji" viewBox="0 0 20 20" aria-hidden="true"><circle cx="10" cy="9.500" r="9.500" fill="url(#hot)"/><path d="M5 6l3-1M12 5l3 1" class="ink"/><circle cx="7" cy="8.500" r="1.200"/><circle cx="13" cy="8.500" r="1.200"/><path d="M6 14q4-4 8 0z" fill="#7b1b12"/><path d="M8 14h5v4q-2 3-5 0z" fill="#f471a5"/><path d="M2 9q3 5 2 8q-2 2-3 0q-1-3 1-8" fill="#58bdf2"/></svg>sore throat</li>
            <li><svg class="emoji" viewBox="0 0 20 20" aria-hidden="true"><use href="#face"/><path d="M5 4l3 2l-3 1M15 4l-3 2l3 1" class="ink"/><path d="M7 9h6l2 7l4 3H1l4-3z" fill="#58a832"/><path d="M8 11v7M12 11v7" stroke="#2c7c21"/></svg>diarrhoea</li>
            <li><svg class="emoji" viewBox="0 0 20 20" aria-hidden="true"><use href="#face"/><circle cx="6.500" cy="8" r="1.200"/><circle cx="13.500" cy="8" r="1.200"/></svg>conjunctivitis</li>
            <li><svg class="emoji" viewBox="0 0 20 20" aria-hidden="true"><use href="#bandage"/></svg>headache</li>
            <li><svg class="emoji" viewBox="0 0 20 20" aria-hidden="true"><path d="M0 2q5 2 10 1q5 1 10-1q-1 5-3 5H3Q1 6 0 2" fill="#26262c"/><path d="M2 6q4-1 8 0q4-1 8 0v5q-1 7-8 7t-8-7z" fill="#ee647e"/><path d="M10 8v8" stroke="#b93b57"/><path d="M3 5q7 2 14 0" stroke="#fff" fill="none"/></svg>loss of taste or smell</li>
            <li><svg class="emoji" viewBox="0 0 20 20" aria-hidden="true"><path d="M2 17Q0 1 9 0q8 0 9 9q-2 9-7 9z" fill="#d8941b"/><circle cx="10" cy="9" r="6.500" fill="#ffc73a"/><path d="M3 9Q3 2 10 2q5 1 6 5q-6 1-8-3q-1 3-5 5" fill="#e9a622"/><path d="M5 10l5-2l5 3l-2 5l-5-1z" fill="#eda32a" stroke="#94600d"/><path d="M0 20q1-3 5-3l7-1l5-2l3 1v5z" fill="#62259b"/></svg>a rash on skin</li>
            <li><svg class="emoji" viewBox="0 0 20 20" aria-hidden="true"><path d="M6 12L2 6M8 10L6 2M11 10V1M14 11L16 4M14 17l5-4" stroke="#ffc43b" stroke-width="2.500" stroke-linecap="round"/><path d="M5 10l10-1l1 6q-1 5-6 5q-4-1-5-10" fill="#ffc43b"/><path d="M8 13q4-2 5 4" fill="none" stroke="#df951b" stroke-width=".8"/></svg>discolouration of fingers or toes</li>
          </ul>
        </section>
        <section class="group">
          <h2>Serious symptoms:</h2>
          <ul>
            <li><svg class="emoji" viewBox="0 0 20 20" aria-hidden="true"><path d="M8 0h5q-1 9 3 13q3 5-2 5q-4 2-8 0q-5 0-2-5q4-3 4-13" fill="#ffc33b"/><path d="M3 17q3-2 5 1q2 1 4 0q3-3 5-1" fill="none" stroke="#d58314"/></svg>difficulty breathing or shortness of breath</li>
            <li><svg class="emoji" viewBox="0 0 20 20" aria-hidden="true"><use href="#face"/><path d="M3 5l4-1M13 4l4 1M4 8q2 1 4 0M12 8q2 1 4 0" class="ink"/><path d="M3 9h4v10q-5-2-5-5zM13 9h4l1 5q-1 4-5 5z" fill="#55afe8"/><ellipse cx="10" cy="14" rx="2.500" ry="3" fill="#68320c"/></svg>chest pain or pressure</li>
            <li><svg class="emoji" viewBox="0 0 20 20" aria-hidden="true"><use href="#face"/><path d="M4 5l3-2M13 3l3 2" class="ink"/><circle cx="6.500" cy="8" r="1.300"/><circle cx="13.500" cy="8" r="1.300"/><path d="M7 15q3-4 6 0z" fill="#68320c"/></svg>loss of speech or movement</li>
          </ul>
        </section>
        <div class="meta"><time>1:14 AM</time></div>
        <button class="more" aria-label="Message options"><svg viewBox="0 0 18 18"><path d="M2.500 5.500L9 12L15.500 5.500" fill="none" stroke="#a5a5a5" stroke-width="2"/></svg></button>
      </article>
    </div>
    <div class="track"><div class="thumb"></div></div>
    <svg class="pointer" viewBox="0 0 12 18" aria-hidden="true"><path d="M1 0v14l3-3l2.500 6l2.500-1l-2.500-5.500h4.500z" fill="#000" stroke="#fff"/></svg>
  </main>
</div>
</body>
</html>
```
FILE: styles.css
```
* { box-sizing: border-box; }

body {
  margin: 0;
  font-family: Inter, "Liberation Sans", sans-serif;
  font-size: 14px;
  line-height: 20px;
  color: #303030;
}

h1, h2, p, ul { margin: 0; padding: 0; }
ul { list-style: none; }

button {
  border: 0;
  padding: 0;
  background: none;
  cursor: pointer;
}

.defs {
  position: absolute;
  width: 0;
  height: 0;
}

.app {
  display: flex;
  flex-direction: column;
  min-height: 100vh;
  border-top: 1px solid #078f80;
}

.bar {
  display: flex;
  align-items: center;
  gap: 15px;
  padding: 9px 24px 10px 17px;
  border-bottom: 1px solid #d2cdc8;
  background: #eaeaea;
}

.avatar {
  width: 40px;
  height: 40px;
}

.name {
  flex: 1;
  font-size: 16px;
  font-weight: 400;
  color: #000;
}

.tools {
  display: flex;
  gap: 26px;
}

.tool svg {
  display: block;
  width: 24px;
  height: 24px;
  fill: #858585;
}

.chat {
  position: relative;
  flex: 1;
  overflow: hidden;
  padding: 6px 6px 9px 0;
  border-left: 1px solid #d4ccc5;
  background: #e0d8cf;
}

.wallpaper {
  position: absolute;
  top: 0;
  left: -1px;
  fill: none;
  stroke: #d3cac1;
  stroke-width: 3;
  stroke-linejoin: round;
}

.wallpaper text {
  font-family: Inter, sans-serif;
  font-weight: 700;
}

/* Each ring is a round dot with a smaller background-coloured dot on top. */
.ring {
  stroke-width: var(--dot);
  stroke-linecap: round;
}

.rings { --dot: 13px; }
.rings.big { --dot: 24px; }
.rings > use { --dot: 7px; stroke: #e0d8cf; }
.rings.big > use { --dot: 18px; }

.spots {
  stroke-width: 7;
  stroke-linecap: round;
}

.thread {
  position: relative;
  display: flex;
  flex-direction: column;
  gap: 12px;
  padding: 0 9%;
}

.bubble {
  position: relative;
  border-radius: 8px;
  box-shadow: 0 1px 1px rgba(0, 0, 0, .18);
}

.sent {
  display: flex;
  align-items: flex-end;
  gap: 12px;
  align-self: flex-end;
  padding: 6px 7px 7px 9px;
  border-top-right-radius: 0;
  background: #d9f8c4;
}

.received {
  width: 65%;
  padding: 6px 7px 8px 9px;
  border-top-left-radius: 0;
  background: #fff;
}

.tail {
  position: absolute;
  top: 0;
  width: 8px;
  height: 13px;
}

.sent .tail { left: 100%; }
.received .tail { right: 100%; }

.meta {
  display: flex;
  align-items: center;
  gap: 3px;
  font-size: 11px;
  line-height: 12px;
  color: #8c8c8c;
}

.sent .meta {
  margin-bottom: -3px;
  color: #82957a;
}

.received .meta {
  position: absolute;
  right: 7px;
  bottom: 4px;
}

.ticks {
  width: 16px;
  height: 12px;
}

.group {
  margin-top: 19px;
  padding-left: 4px;
}

.group h2 {
  font-size: 14px;
  line-height: 19px;
  font-weight: 700;
  color: #000;
}

.group li {
  display: flex;
  align-items: center;
  gap: 1px;
}

.emoji {
  width: 20px;
  height: 20px;
  vertical-align: middle;
}

.line .emoji { margin-block: -2px; }
.group .emoji { margin-left: 1px; }
.emoji circle:not([fill]) { fill: #5c3510; }

.ink {
  fill: none;
  stroke: #7a4712;
}

.more {
  position: absolute;
  top: 3px;
  right: 0;
  display: flex;
  align-items: center;
  justify-content: flex-end;
  width: 72px;
  height: 26px;
  padding-right: 8px;
  border-radius: 8px;
  background: linear-gradient(to right, rgba(255, 255, 255, 0) 20%, #fff 58%);
}

.more svg {
  width: 18px;
  height: 18px;
}

.track {
  position: absolute;
  top: 0;
  right: 0;
  bottom: 0;
  width: 6px;
  background: rgba(255, 255, 255, .12);
}

.thumb {
  height: 20px;
  margin-top: 71px;
  background: #b7b0a9;
}

.pointer {
  position: absolute;
  right: 0;
  bottom: -6px;
  width: 12px;
  height: 18px;
}
```
